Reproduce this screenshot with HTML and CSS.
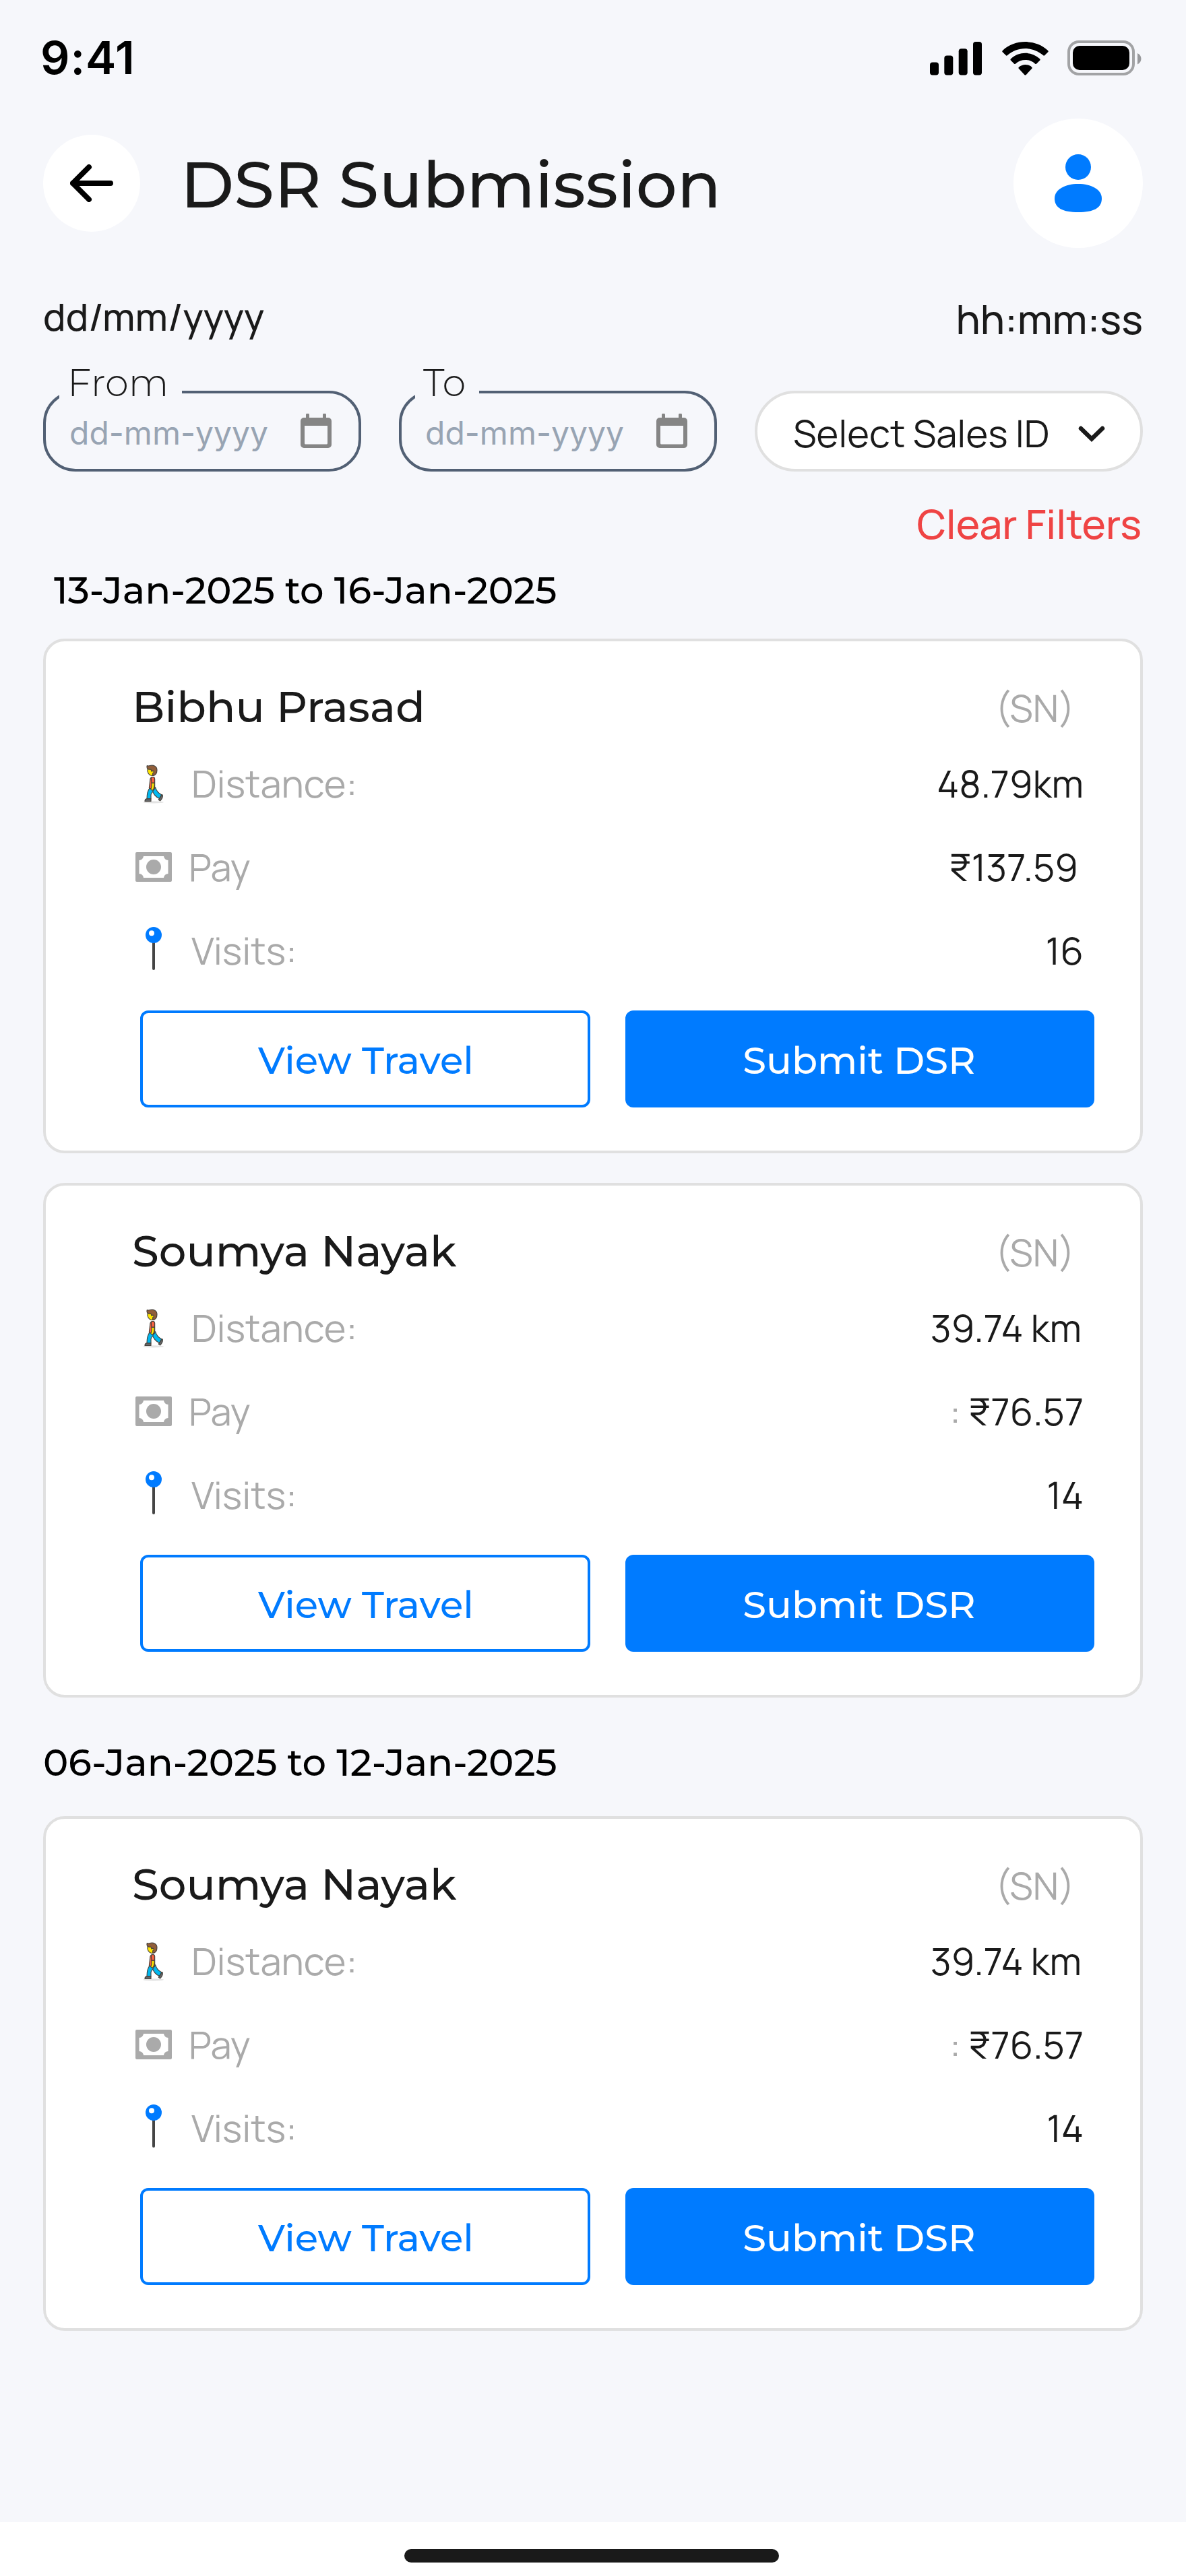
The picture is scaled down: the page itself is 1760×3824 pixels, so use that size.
FILE: index.html
```html
<!DOCTYPE html>
<html lang="en">
<head>
<meta charset="utf-8">
<title>DSR Submission</title>
<link rel="stylesheet" href="styles.css">
</head>
<body>
<svg class="sprite" aria-hidden="true">
  <symbol id="i-walk" viewBox="100 68 96 176">
    <ellipse cx="147" cy="238" rx="46" ry="5" fill="#e3e3e3"/>
    <g stroke="#45413c" stroke-width="3.4" stroke-linejoin="round" stroke-linecap="round">
      <path d="M141 175l15-3c4 15 14 26 27 33l-9 17c-17-7-28-22-33-39z" fill="#00b8f0"/>
      <path d="M132 173l18 4c0 12-13 18-14 28v18h-18c0-22 2-36 14-50z" fill="#00b8f0"/>
      <path d="M177 217l8-13 3 3c1 9-4 18-11 25l-7-5z" fill="#656769"/>
      <path d="M117 223h19v11h-27c0-7 3-10 8-11z" fill="#656769"/>
      <path d="M133 134c3-10 18-11 20 0v45c-8 2-18 1-25-4z" fill="#ff6242"/>
      <path d="M139 151l12 1c2 11-2 29-8 33-7-1-9-5-6-9 3-8 2-16 2-25z" fill="#ffe500"/>
      <path d="M137 132c0-8 15-8 15 1v18l-13 1z" fill="#ff6242"/>
      <path d="M121 90c-3 15 6 29 19 30 13 0 21-10 21-23 0-15-20-20-40-7z" fill="#ffe500"/>
      <path d="M119 75c3 3 7 1 12 0 17-4 32 3 32 20 0 13-7 23-19 25v-11c5-1 6-8 2-11-3-1-5 3-7 3l-3-9c-9 1-18-1-18-10 0-3 0-5 1-7z" fill="#915e3a"/>
    </g>
  </symbol>
  <symbol id="i-pay" viewBox="0 0 54 44">
    <path fill="#aaa" fill-rule="evenodd" d="M2 0h50a2 2 0 0 1 2 2v40a2 2 0 0 1-2 2H2a2 2 0 0 1-2-2V2a2 2 0 0 1 2-2zM12 6a7 7 0 0 1-6.500 6v20a7 7 0 0 1 6.500 6h30a7 7 0 0 1 6.500-6V12A7 7 0 0 1 42 6z"/>
    <circle cx="27" cy="22" r="11" fill="#aaa"/>
  </symbol>
  <symbol id="i-pin" viewBox="0 0 24 64">
    <path d="M12 20v42" stroke="#454545" stroke-width="4" stroke-linecap="round"/>
    <circle cx="12" cy="12" r="12" fill="#007bff"/><circle cx="9" cy="9.300" r="4" fill="#fff"/>
  </symbol>
  <symbol id="i-cal" viewBox="0 0 46 52">
    <path fill="#858585" fill-rule="evenodd" d="M8 2a2.500 2.500 0 0 1 5 0v4h20V2a2.500 2.500 0 0 1 5 0v4h3a5 5 0 0 1 5 5v35a5 5 0 0 1-5 5H5a5 5 0 0 1-5-5V11a5 5 0 0 1 5-5h3zM6 18v26a1.500 1.500 0 0 0 1.500 1.500h31A1.500 1.500 0 0 0 40 44V18z"/>
  </symbol>
</svg>

<header class="status">
  <time class="clock">9:41</time>
  <div class="indicators">
    <svg class="signal" viewBox="0 0 77 50"><rect y="30.500" width="13" height="19" rx="4"/><rect x="21.300" y="20.500" width="13" height="29" rx="4"/><rect x="42.700" y="10.200" width="13" height="39.300" rx="4"/><rect x="64" width="13" height="49.500" rx="4"/></svg>
    <svg class="wifi" viewBox="0 0 69 50"><path d="M1 15.500a1.800 1.800 0 0 1-.1-2.600C19-4.200 50-4.200 68.100 12.900a1.800 1.800 0 0 1-.1 2.600l-4.600 4.600a1.800 1.800 0 0 1-2.400 0c-15-13.400-38-13.400-53 0a1.800 1.800 0 0 1-2.400 0zM13.100 27.800a1.800 1.800 0 0 1 0-2.600c12.300-11.200 30.600-11.200 42.900 0a1.800 1.800 0 0 1 0 2.600l-4.700 4.600a1.800 1.800 0 0 1-2.400 0c-8.400-7.300-20.300-7.300-28.700 0a1.800 1.800 0 0 1-2.400 0zM25 40a1.800 1.800 0 0 1 .1-2.600c5.500-4.700 13.400-4.700 18.900 0a1.800 1.800 0 0 1 .1 2.600l-8.300 8.900a1.800 1.800 0 0 1-2.500 0z"/></svg>
    <svg class="battery" viewBox="0 0 110 52"><rect x="2" y="2" width="96" height="48" rx="15" fill="none" stroke="#a2a3a5" stroke-width="4"/><rect x="8" y="8" width="84" height="36" rx="10"/><path d="M104 19v16.500c7.300-3.100 7.300-13.400 0-16.500z" fill="#98999c"/></svg>
  </div>
</header>

<main class="page">
  <div class="titlebar">
    <button class="back" aria-label="Back"><svg viewBox="0 0 64 56"><path d="M60 28H4M28 4L4 28l24 24" fill="none" stroke="#000" stroke-width="8" stroke-linecap="round" stroke-linejoin="round"/></svg></button>
    <h1 class="title">DSR Submission</h1>
    <div class="avatar"><svg viewBox="0 0 70 86"><circle cx="35" cy="19" r="19"/><path d="M35 44c19 0 35 8 35 21.500C70 80 58 86 35 86S0 80 0 65.500C0 52 16 44 35 44z"/></svg></div>
  </div>

  <div class="now">
    <span class="now-date">dd/mm/yyyy</span>
    <span class="now-time">hh:mm:ss</span>
  </div>

  <div class="filters">
    <div class="date"><span class="legend">From</span><span class="hint">dd-mm-yyyy</span><svg class="cal"><use href="#i-cal"/></svg></div>
    <div class="date"><span class="legend">To</span><span class="hint">dd-mm-yyyy</span><svg class="cal"><use href="#i-cal"/></svg></div>
    <div class="select"><span class="select-text">Select Sales ID</span><svg class="chev" viewBox="0 0 40 24"><path d="M4 4l16 15.500L36 4" fill="none" stroke="#1a1a1a" stroke-width="6.500" stroke-linecap="round" stroke-linejoin="miter"/></svg></div>
  </div>
  <a class="clear">Clear Filters</a>

  <h2 class="range range-inset">13-Jan-2025 to 16-Jan-2025</h2>
  <section class="card">
    <div class="head"><h3 class="name">Bibhu Prasad</h3><span class="code">(SN)</span></div>
    <div class="row"><span class="ico"><svg class="walk"><use href="#i-walk"/></svg></span><span class="label">Distance:</span><span class="value">48.79km</span></div>
    <div class="row"><span class="ico"><svg class="pay"><use href="#i-pay"/></svg></span><span class="label label-pay">Pay</span><span class="value value-in">₹137.59</span></div>
    <div class="row"><span class="ico"><svg class="pin"><use href="#i-pin"/></svg></span><span class="label">Visits:</span><span class="value">16</span></div>
    <div class="actions"><button class="btn btn-line">View Travel</button><button class="btn btn-fill">Submit DSR</button></div>
  </section>
  <section class="card">
    <div class="head"><h3 class="name">Soumya Nayak</h3><span class="code">(SN)</span></div>
    <div class="row"><span class="ico"><svg class="walk"><use href="#i-walk"/></svg></span><span class="label">Distance:</span><span class="value value-km">39.74 km</span></div>
    <div class="row"><span class="ico"><svg class="pay"><use href="#i-pay"/></svg></span><span class="label label-pay">Pay</span><span class="value"><span class="colon">: </span>₹76.57</span></div>
    <div class="row"><span class="ico"><svg class="pin"><use href="#i-pin"/></svg></span><span class="label">Visits:</span><span class="value">14</span></div>
    <div class="actions"><button class="btn btn-line">View Travel</button><button class="btn btn-fill">Submit DSR</button></div>
  </section>

  <h2 class="range">06-Jan-2025 to 12-Jan-2025</h2>
  <section class="card">
    <div class="head"><h3 class="name">Soumya Nayak</h3><span class="code">(SN)</span></div>
    <div class="row"><span class="ico"><svg class="walk"><use href="#i-walk"/></svg></span><span class="label">Distance:</span><span class="value value-km">39.74 km</span></div>
    <div class="row"><span class="ico"><svg class="pay"><use href="#i-pay"/></svg></span><span class="label label-pay">Pay</span><span class="value"><span class="colon">: </span>₹76.57</span></div>
    <div class="row"><span class="ico"><svg class="pin"><use href="#i-pin"/></svg></span><span class="label">Visits:</span><span class="value">14</span></div>
    <div class="actions"><button class="btn btn-line">View Travel</button><button class="btn btn-fill">Submit DSR</button></div>
  </section>
</main>

<footer class="home"><div class="home-bar"></div></footer>
</body>
</html>
```
FILE: styles.css
```css
* {
  box-sizing: border-box;
  margin: 0;
  padding: 0;
}

body {
  width: 1760px;
  height: 3824px;
  display: flex;
  flex-direction: column;
  background: #f6f7fb;
  color: #1a1a1a;
  font-family: Manrope, Inter, sans-serif;
}

button {
  font: inherit;
  background: none;
  border: 0;
}

svg {
  display: block;
}

.sprite {
  width: 0;
  height: 0;
  position: absolute;
}

/* Status bar */
.status {
  height: 176px;
  padding: 45px 66px 0 60px;
  display: flex;
  justify-content: space-between;
  align-items: flex-start;
  color: #000;
}

.clock {
  font: 600 68px/80px Inter, sans-serif;
  letter-spacing: 0.9px;
}

.indicators {
  display: flex;
  padding-top: 15px;
}

.signal {
  width: 77px;
  height: 50px;
  margin: 2px 30px 0 0;
}

.wifi {
  width: 69px;
  height: 50px;
  margin: 2px 28px 0 0;
}

.battery {
  width: 110px;
  height: 52px;
}

/* Title bar */
.page {
  flex: 1;
  padding: 0 64px;
  display: flex;
  flex-direction: column;
}

.titlebar {
  display: flex;
  align-items: center;
  height: 192px;
}

.back {
  width: 144px;
  height: 144px;
  border-radius: 50%;
  background: #fff;
  display: grid;
  place-items: center;
}

.back svg {
  width: 64px;
  height: 56px;
}

.title {
  flex: 1;
  margin-left: 60px;
  padding-top: 4px;
  font: 500 96px/120px Montserrat, Inter, sans-serif;
}

.avatar {
  width: 192px;
  height: 192px;
  border-radius: 50%;
  background: #fff;
  display: grid;
  place-items: center;
}

.avatar svg {
  width: 70px;
  height: 86px;
  fill: #007bff;
}

/* Date and time */
.now {
  margin-top: 64px;
  height: 80px;
  display: flex;
  justify-content: space-between;
  font-weight: 500;
}

.now-date {
  font-size: 56px;
  line-height: 76px;
}

.now-time {
  font-size: 60px;
  line-height: 82px;
}

/* Filters */
.filters {
  margin-top: 68px;
  display: flex;
  gap: 56px;
}

.date {
  position: relative;
  width: 472px;
  height: 120px;
  border: 4px solid #526074;
  border-radius: 48px;
  padding: 0 40px 0 35px;
  display: flex;
  align-items: center;
  justify-content: space-between;
}

.legend {
  position: absolute;
  left: 20px;
  top: -49px;
  padding: 0 20px 0 12px;
  background: #f6f7fb;
  font: 300 56px/66px Montserrat, Inter, sans-serif;
}

.hint {
  font: 400 48px/60px Inter, sans-serif;
  color: #98a4b3;
  padding-top: 5px;
}

.cal {
  width: 46px;
  height: 52px;
}

.select {
  flex: 1;
  height: 120px;
  border: 4px solid #e0e0e0;
  border-radius: 60px;
  background: #fff;
  display: flex;
  align-items: center;
  justify-content: space-between;
  padding: 0 52px 0 53px;
}

.select-text {
  font-size: 56px;
  line-height: 80px;
  padding-top: 6px;
}

.chev {
  width: 40px;
  height: 24px;
  margin-top: 8px;
}

.clear {
  align-self: flex-end;
  margin: 37px 2px 0 0;
  font-size: 60px;
  font-weight: 500;
  line-height: 80px;
  color: #ef4444;
}

/* Groups and cards */
.range {
  margin-top: 60px;
  margin-bottom: 44px;
  font: 500 56px/72px Montserrat, Inter, sans-serif;
  color: #000;
}

.range-inset {
  margin: 23px 0 36px 16px;
}

.card {
  height: 764px;
  border: 4px solid #e0e0e0;
  border-radius: 32px;
  background: #fff;
  padding: 57px 68px 0 128px;
}

.card + .card {
  margin-top: 44px;
}

.head {
  display: flex;
  justify-content: space-between;
  height: 80px;
  margin-bottom: 12px;
}

.name {
  font: 500 64px/80px Montserrat, Inter, sans-serif;
}

.code {
  font-size: 56px;
  line-height: 83px;
  color: #aaa;
  margin-right: 29px;
}

.row {
  height: 124px;
  display: flex;
  align-items: center;
  font-size: 56px;
  line-height: 80px;
}

.ico {
  width: 64px;
  display: grid;
  justify-items: center;
}

.walk {
  width: 32px;
  height: 59px;
}

.pay {
  width: 54px;
  height: 44px;
}

.pin {
  width: 24px;
  height: 64px;
  margin-top: -6px;
}

.label {
  color: #aaa;
  margin-left: 24px;
}

.label-pay {
  margin-left: 20px;
}

.value {
  margin-left: auto;
  margin-right: 16px;
}

.value-in {
  margin-right: 24px;
}

.value-km {
  margin-right: 19px;
}

.colon {
  color: #aaa;
}

.actions {
  margin-top: 27px;
  display: flex;
  gap: 52px;
  padding-left: 12px;
}

.btn {
  height: 144px;
  border-radius: 12px;
  font: 500 56px/72px Montserrat, Inter, sans-serif;
}

.btn-line {
  width: 668px;
  border: 4px solid #007bff;
  color: #007bff;
  padding: 3px 0 0 2px;
}

.btn-fill {
  width: 696px;
  background: #007bff;
  color: #fff;
  padding: 3px 2px 0 0;
}

/* Home indicator */
.home {
  height: 80px;
  padding: 40px 0 0 600px;
  background: #fff;
}

.home-bar {
  width: 556px;
  height: 20px;
  border-radius: 10px;
  background: #1a1a1a;
}
```
